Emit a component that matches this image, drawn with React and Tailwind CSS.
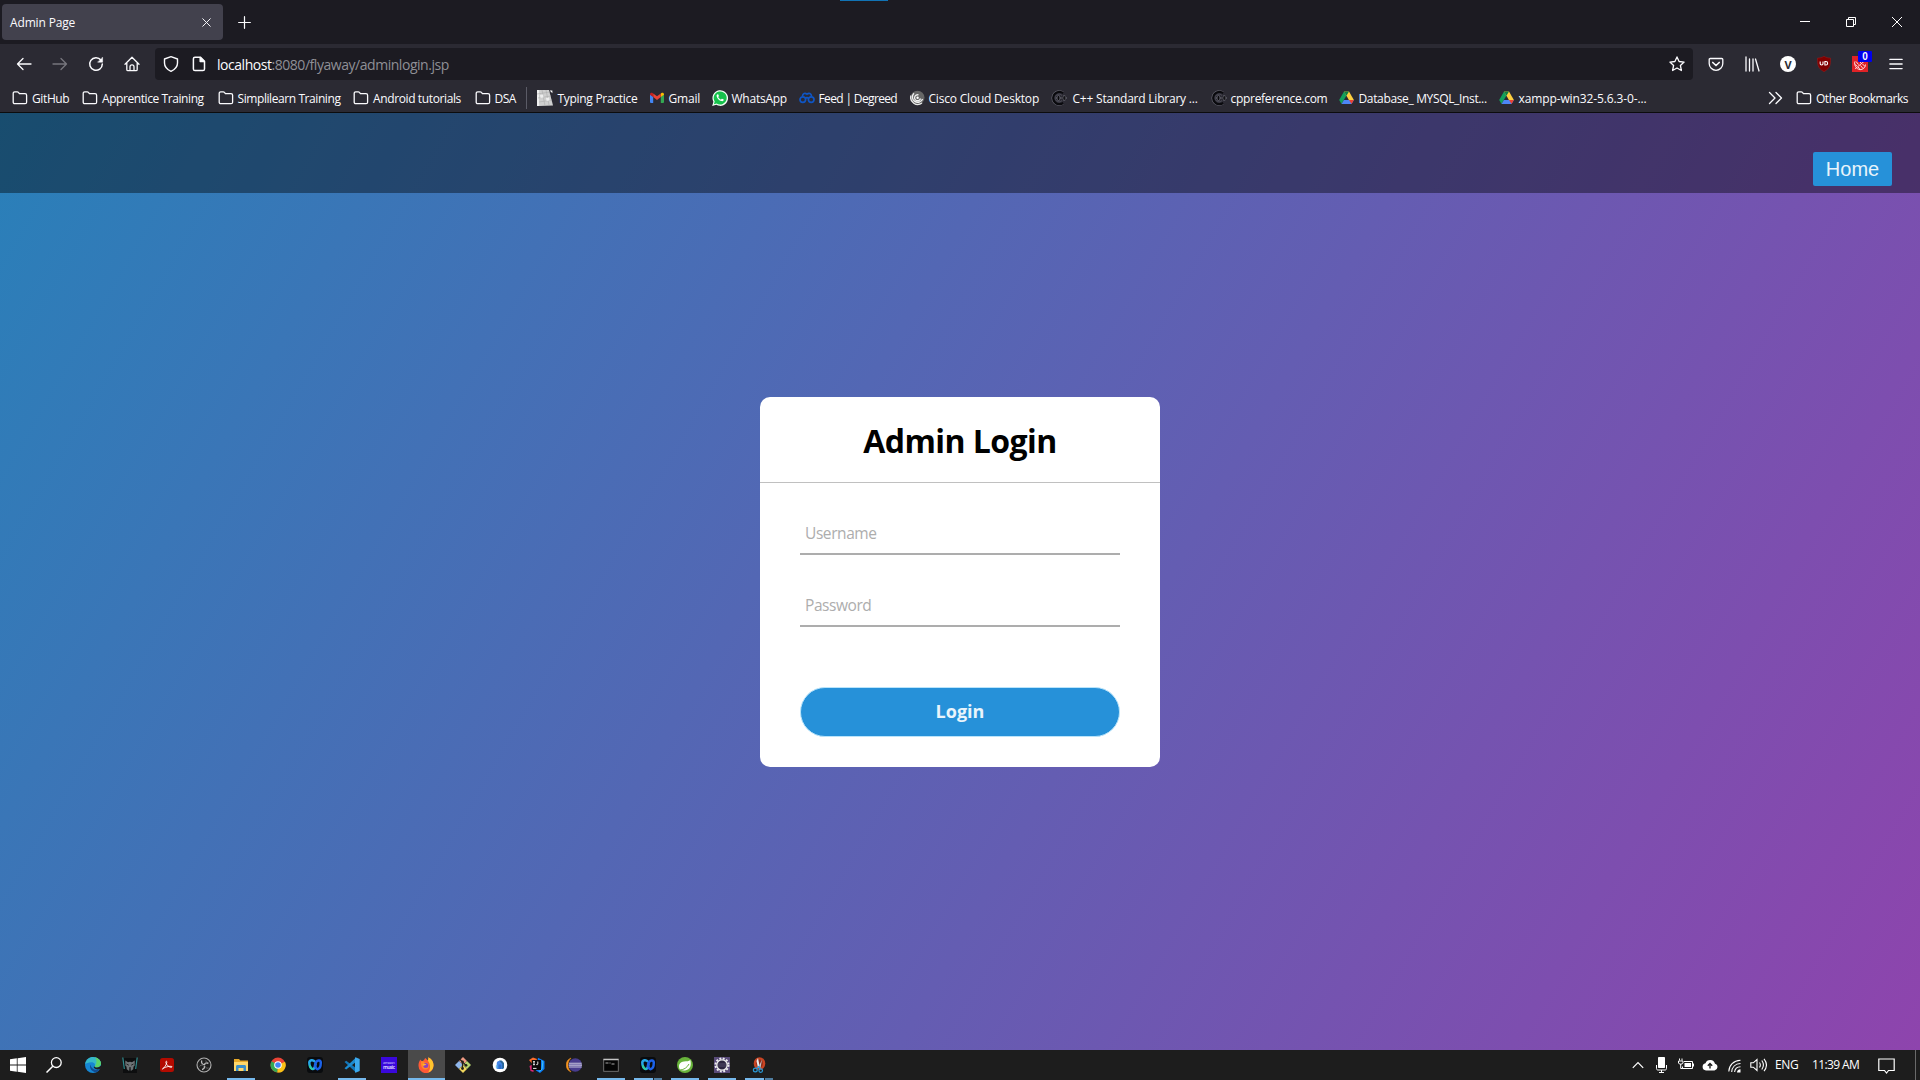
import React from "react";

/* ---------- toolbar icons ---------- */
const Line = ({ children, size = 16, w = 1.3, className = "" }) => (
  <svg width={size} height={size} viewBox="0 0 16 16" fill="none" stroke="currentColor" strokeWidth={w} strokeLinecap="round" strokeLinejoin="round" className={"shrink-0 " + className}>
    {children}
  </svg>
);
const Folder = () => (
  <Line className="text-[#fbfbfe]">
    <path d="M1.2 12.2V3.4c0-1 .6-1.6 1.6-1.6h2.4c.5 0 .9.2 1.2.6l1 1.2h5.6c1 0 1.6.6 1.6 1.6v7c0 .9-.6 1.5-1.5 1.5H2.7c-.9 0-1.5-.6-1.5-1.5z" />
  </Line>
);

/* ---------- bookmark favicons ---------- */
const Keys = () => (
  <svg width="16" height="16" viewBox="0 0 16 16" className="shrink-0">
    <path d="M0 0h12l4 15.5L2 16z" fill="#cfcfcf" />
    <path d="M0 0h2v16H0z" fill="#efefef" />
    <path d="M12.6.4h2.8v2.8z" fill="#fff" />
    <path d="M0 4l13-2M1 8l13-2M2 12l13-2M5 0l3 16M9 0l3 15" stroke="#adadad" strokeWidth=".6" fill="none" />
    <path d="M3 5l3-.5.6 3-3 .5zM9 8l3-.5.6 3-3 .5z" fill="#eee" />
  </svg>
);
const Gmail = () => (
  <svg width="14" height="16" viewBox="0 0 14 16" className="shrink-0">
    <path d="M0 4.5V12a1 1 0 0 0 1 1h2.2V6.8z" fill="#4285f4" />
    <path d="M14 4.5V12a1 1 0 0 1-1 1h-2.2V6.8z" fill="#34a853" />
    <path d="M10.8 3.6V7L14 4.8v-.5c0-1.6-1.6-2-2.5-1.3z" fill="#fbbc04" />
    <path d="M3.2 7V3.4L7 6.2l3.8-2.8V7L7 9.9z" fill="#ea4335" />
    <path d="M0 4.3v.5L3.2 7V3.4L2.5 3C1.6 2.3 0 2.7 0 4.3z" fill="#c5221f" />
  </svg>
);
const WhatsApp = () => (
  <svg width="16" height="16" viewBox="0 0 16 16" className="shrink-0">
    <path d="M.2 15.9l1.2-4.1A7.8 7.8 0 1 1 4.3 14.8z" fill="#f4fff6" />
    <path d="M1.9 14.2l.8-2.8a6.5 6.5 0 1 1 2 2z" fill="#16c24c" />
    <path d="M5.5 4.2c-.9.4-1.1 1.4-.7 2.5.7 1.9 2.4 3.7 4.4 4.4 1.2.4 2.1 0 2.4-.9.2-.5.1-.7-.3-.9l-1.3-.6c-.5-.2-.8.9-1.2.8-1.1-.4-2-1.3-2.5-2.3-.1-.3.7-.7.6-1.1l-.6-1.5c-.1-.4-.4-.5-.8-.4z" fill="#fff" />
  </svg>
);
const Degreed = () => (
  <svg width="16" height="16" viewBox="0 0 16 16" fill="none" stroke="#0f55c4" strokeWidth="1.7" className="shrink-0">
    <circle cx="3.8" cy="9.6" r="2.8" /><circle cx="12.2" cy="9.6" r="2.8" />
    <path d="M3.4 6.3C3.8 3.4 6 2.5 8 4.2c2-1.7 4.2-.8 4.6 2.1M6.4 8.2c1-.7 2.2-.7 3.2 0" />
  </svg>
);
const Cisco = () => (
  <svg width="15" height="16" viewBox="0 0 15 16" className="shrink-0">
    <circle cx="7.5" cy="7.8" r="7" fill="#666" />
    <path d="M1 5.5A7 7 0 0 0 12 13" stroke="#e8e8e8" strokeWidth="1.3" fill="none" />
    <path d="M4 3.2A5.3 5.3 0 1 0 12.6 9M10.5 8.500a3 3 0 1 1-2-3.600" stroke="#f2f2f2" strokeWidth="1.3" fill="none" />
    <circle cx="7.6" cy="7.8" r="1.2" fill="#fff" />
  </svg>
);
const Cpp = () => (
  <svg width="16" height="16" viewBox="0 0 16 16" fill="none" className="shrink-0">
    <path d="M12.600 2.600A7 7 0 1 0 12.600 13.400" stroke="#6a6a75" strokeWidth="1.400" />
    <path d="M12.300 3.200A6.200 6.200 0 1 0 12.300 12.800" stroke="#0a0a0e" strokeWidth="2.200" />
    <path d="M11 5.500a3.900 3.900 0 1 0 0 5" stroke="#5c5c67" strokeWidth=".7" />
    <path d="M5 8h5M7.500 5.500v5M10.700 8h5M13.200 5.500v5" stroke="#74747f" strokeWidth="2.100" />
    <path d="M5.400 8h4.200M7.500 5.900v4.200M11.100 8h4.200M13.200 5.900v4.200" stroke="#09090c" strokeWidth="1.200" />
  </svg>
);
const Drive = () => (
  <svg width="15" height="16" viewBox="0 0 15 16" className="-ml-px mr-px shrink-0">
    <path d="M5 1.5L.2 10l2.3 4L7.5 5.5z" fill="#11a05c" />
    <path d="M5 1.5h5L14.9 10H9.9z" fill="#ffcf3f" />
    <path d="M5 1.5h5L7.5 5.7z" fill="#0b8043" />
    <path d="M2.5 14l2.4-4h10l-2.4 4z" fill="#4d86f7" />
    <path d="M10 10h4.9l-2.4 4z" fill="#ea4335" />
  </svg>
);

/* [icon, label, slot width, gap and tracking] */
const bookmarks = [
  [Folder, "GitHub", "w-[70px] gap-[4px] tracking-[-0.380px]"],
  [Folder, "Apprentice Training", "w-[135.500px] gap-[4px] tracking-[-0.420px]"],
  [Folder, "Simplilearn Training", "w-[135.500px] gap-[4px] tracking-[-0.420px]"],
  [Folder, "Android tutorials", "w-[121.500px] gap-[4px] tracking-[-0.380px]"],
  [Folder, "DSA", "w-[50px] gap-[4px] tracking-[-0.550px]"],
];
const sites = [
  [Keys, "Typing Practice", "w-[113px] gap-[5px] tracking-[-0.300px]"],
  [Gmail, "Gmail", "w-[62px] gap-[5px] tracking-[-0.200px]"],
  [WhatsApp, "WhatsApp", "w-[87px] gap-[4px] tracking-[-0.240px]"],
  [Degreed, "Feed | Degreed", "w-[111px] gap-[4px] tracking-[-0.640px]"],
  [Cisco, "Cisco Cloud Desktop", "w-[141px] gap-[4px] tracking-[-0.200px]"],
  [Cpp, "C++ Standard Library ...", "w-[160px] gap-[6px] tracking-[-0.220px]"],
  [Cpp, "cppreference.com", "w-[129px] gap-[4px] tracking-[-0.290px]"],
  [Drive, "Database_ MYSQL_Inst...", "w-[160px] gap-[4px] tracking-[-0.350px]"],
  [Drive, "xampp-win32-5.6.3-0-...", "w-[160px] gap-[4px] tracking-[-0.120px]"],
];
const Bookmark = ({ item: [Icon, label, cls] }) => (
  <div className={"flex shrink-0 items-center whitespace-nowrap " + cls}>
    <Icon />
    <span className="pt-px">{label}</span>
  </div>
);

/* ---------- taskbar icons ---------- */
const T = ({ children }) => (
  <svg width="16" height="16" viewBox="0 0 16 16" fill="none">{children}</svg>
);
const Windows = () => <T><path d="M0 2.300l6.800-1v6.300H0zM7.600 1.200L16 0v7.600H7.600zM0 8.400h6.800v6.300L0 13.700zM7.600 8.400H16V16l-8.400-1.200z" fill="#fff" /></T>;
const SearchIcon = () => <T><circle cx="10.300" cy="5.600" r="4.900" stroke="#fff" strokeWidth="1.300" /><path d="M6.800 9.200L.5 15.500" stroke="#fff" strokeWidth="1.500" /></T>;
const Edge = () => (
  <T>
    <circle cx="8" cy="8" r="8" fill="#1686d3" />
    <path d="M.1 7C1 2.500 4.500 0 8 0c4.500 0 8 3.200 8 6.600 0 2.300-1.800 3.800-4 3.800-1.700 0-2.600-.6-2.300-1.200.9-1.700-.4-4-3.200-4C3.700 5.200 1 6.300.1 7z" fill="#36b9c8" />
    <path d="M10 .3c3.700 1 6 3.600 6 6.300 0 2.300-1.800 3.800-4 3.800-1.700 0-2.600-.6-2.300-1.200C12 7.500 12 3 10 .3z" fill="#5bd368" />
    <path d="M5.500 7.500C4 10.500 6.500 15 11 15.200c1.500-.6 2.900-1.600 3.800-3C10 14.400 6 11.500 5.500 7.500z" fill="#114b91" />
    <path d="M9.700 9.200c-.4.800.6 1.300 2.300 1.300 1.500 0 3-.7 3.700-1.900l.8 2.200-1.600 1.200c-2.700 1.100-5.700.1-6.300-2z" fill="#1d1d1d" />
  </T>
);
const Predator = () => (
  <T>
    <path d="M1 1h14v15H1z" fill="#0d0e0f" />
    <path d="M.8.500L1.500 5.500 2.300 12M15.200.500l-.7 5-.8 6.500" stroke="#2f8d90" strokeWidth="1.200" />
    <path d="M3.300 3.500L6 5.300l2-.6 2 .6 2.700-1.800v5l-1.200 1.200-.3 2.500L8.800 14l-.3-4h-1l-.3 4-2.400-1.800-.3-2.500-1.200-1.200z" fill="#6d7376" />
    <path d="M4.500 7l2.300 1.200M11.500 7L9.200 8.200" stroke="#1a1b1c" strokeWidth=".9" />
  </T>
);
const Acrobat = () => (
  <T><rect x="1" y="1" width="14" height="14" rx="2.500" fill="#b30b00" /><path d="M3.500 12c2-1.300 3.900-4.300 4.300-6.500.3-1.700-1.200-1.700-.9 0 .4 2.200 2.700 4.500 5 4.800 1.600.1 1.500-1 0-1-2.400-.1-5.300.7-7.400 1.900-1.200.7-1.500 1.100-1 .8z" stroke="#fff" strokeWidth=".9" /></T>
);
const Obs = () => (
  <T>
    <circle cx="8" cy="8" r="7" fill="#202020" stroke="#b0b0b0" strokeWidth="1.100" />
    <path d="M5.800 3.600c-.8 2 .3 3.700 2.200 4M12.400 6.300C10.700 5.500 8.900 6.300 8.300 8M6 12.500c1.900-.2 3-2 2.300-3.800" stroke="#c0c0c0" strokeWidth="1.300" />
    <path d="M3.500 9.500c.8-1.300 2.300-1.800 3.800-1.200M9.700 3.600c1 1.200.8 2.600-.3 3.700M12.500 11c-1.500.5-3-.3-3.500-1.800" stroke="#707070" strokeWidth=".9" />
  </T>
);
const Explorer = () => (
  <T><path d="M1 2h5l1.300 1.500H15V14H1z" fill="#e8a928" /><path d="M1 5h14v9H1z" fill="#ffd86b" /><path d="M3 14V9.500C3 8.700 3.500 8 4.500 8h7c1 0 1.500.7 1.500 1.500V14h-2.500v-3h-5v3z" fill="#3b8fc8" /></T>
);
const Chrome = () => (
  <T>
    <circle cx="8" cy="8" r="7.500" fill="#ea4335" />
    <path d="M8 8L1.500 4.200A7.500 7.500 0 0 0 7.500 15.500z" fill="#34a853" />
    <path d="M8 8l7-3.200A7.500 7.500 0 0 1 7.400 15.500z" fill="#fbc116" />
    <circle cx="8" cy="8" r="3.800" fill="#fff" /><circle cx="8" cy="8" r="2.800" fill="#4285f4" />
  </T>
);
const Webex = () => (
  <T>
    <rect x="0" y="0" width="16" height="16" rx="3" fill="#090b0e" />
    <path d="M7.500 4.300C6 2.500 2.400 2.800 2.300 5.600c0 2.700 1.200 6.200 3.200 6.500 1.700.2 2.500-2 3-4.800" stroke="#25a7e8" strokeWidth="2.500" strokeLinecap="round" />
    <path d="M8 8.500c.6 2.300 1.500 3.900 2.900 3.600 2-.5 2.900-3.800 2.900-6.500-.1-2.600-3.300-2.700-4.500-.8-.7 1-1.100 2.300-1.400 3.700" stroke="#1c62e8" strokeWidth="2.500" strokeLinecap="round" />
    <path d="M3 9c.6 2 1.400 3 2.500 3" stroke="#2fd09a" strokeWidth="2" strokeLinecap="round" />
  </T>
);
const VsCode = () => (
  <T>
    <path d="M.5 5l1.700-1.200L12 11v4.500z" fill="#1376b8" />
    <path d="M.5 11.200l1.700 1.200L12 5V.5z" fill="#1c8bd1" />
    <path d="M11.500.2L15.700 2v12l-4.200 1.800L11 15V1z" fill="#3ba9ee" />
  </T>
);
const Music = () => (
  <T>
    <rect width="16" height="16" fill="#3a08dc" />
    <text x="8" y="7" textAnchor="middle" fontSize="4.300" fontFamily="Open Sans" fontWeight="600" textLength="12" fill="#a794f5">amazon</text>
    <text x="8" y="12" textAnchor="middle" fontSize="5" fontFamily="Open Sans" fontWeight="700" textLength="12" fill="#cfc3ff">music</text>
  </T>
);
const Firefox = () => (
  <T>
    <path d="M2.500 2.500C3 3.500 3.500 4 4.500 4.200 6 3 6.700 2.500 7 1c1.500.8 2 1.700 2.700 2.500C10.500 2.500 10.500 1 10.300.2c3.500 1.700 5.500 5 5.200 8.600A7.500 7.500 0 0 1 .5 8.500c0-2.500.7-4.300 2-6z" fill="#ff5a36" />
    <path d="M10.300.2c3.500 1.700 5.500 5 5.200 8.600A7.500 7.500 0 0 1 10 15.500c2.800-3.500 2.700-8-.3-12C10.500 2.500 10.500 1 10.300.2z" fill="#ffc52e" />
    <path d="M3 4.500C4.500 4 6 4.500 6.500 5.500 9 5.300 11 6.500 11 9s-1.800 3.500-3.500 3.500C5 12.500 3.500 10.500 3 8z" fill="#ff8a26" />
    <circle cx="7.800" cy="8.400" r="2.500" fill="#9040c0" />
    <path d="M4.500 7.200c1-.8 2.700-.6 4 .2-1 .8-2.300.6-2.800 1.600-.7-.4-1.100-1-1.200-1.800z" fill="#ffb22e" />
  </T>
);
const Git = () => (
  <T>
    <path d="M8 0l4 4-4 4-4-4z" fill="#ef9a83" /><path d="M12 4l4 4-4 4-4-4z" fill="#b5d46f" />
    <path d="M4 4l4 4-4 4-4-4z" fill="#8fb6ea" /><path d="M8 8l4 4-4 4-4-4z" fill="#efd55d" />
    <path d="M5 2.500l5.700 5.700M7.500 5v6.500" stroke="#24201a" strokeWidth="1.200" />
    <circle cx="7.500" cy="4.800" r="1.400" fill="#24201a" /><circle cx="11" cy="8.300" r="1.400" fill="#24201a" /><circle cx="7.500" cy="11.500" r="1.400" fill="#24201a" />
  </T>
);
const Android = () => (
  <T>
    <circle cx="8" cy="8" r="7.300" fill="#fff" />
    <path d="M4.700 12V7a3.300 3.300 0 0 1 6.600 0v5z" fill="#4285e8" />
    <path d="M7 3.600h2.600L12 6v5l-1.800 1.200V7z" fill="#2a6797" />
    <path d="M6.600 7.500h2.800v4.500H6.600z" fill="#2b6cc4" /><path d="M3.800 8.500l1.500-.7v4l-1.500-1z" fill="#73c4ef" />
  </T>
);
const Idea = () => (
  <T>
    <path d="M0 3l4-2.500L8 2 5 9z" fill="#fc6c2b" /><path d="M.5 9l4-2v8l-3-1z" fill="#d92673" />
    <path d="M9 .8L15.500 4v8L11 16l-4-2.500z" fill="#087cfa" /><path d="M12.800 3.500l1 1.700-.8 6.800-3 2.500" stroke="#58d6e6" strokeWidth=".8" />
    <rect x="2.700" y="3" width="9.300" height="10" fill="#090909" />
    <path d="M4 4.700h2M5 4.700v3M4 7.700h2M8.800 4.500v2.500c0 .8-1 .9-1.600.4M4 11.400h3.500" stroke="#fff" strokeWidth=".9" />
  </T>
);
const Eclipse = () => (
  <T>
    <path d="M5 1A7.500 7.500 0 0 0 5 15 9.500 9.500 0 0 1 5 1z" fill="#f7941e" stroke="#f7941e" strokeWidth=".5" />
    <circle cx="9.300" cy="8" r="6.700" fill="#483c8e" />
    <path d="M3 6.200h12.700M2.700 8.100h13.300M3 10h12.700" stroke="#c4c1dc" strokeWidth="1.100" />
  </T>
);
const Cmd = () => (
  <T><rect x=".7" y="2" width="14.600" height="12.300" fill="#050505" stroke="#777" strokeWidth=".9" /><path d="M.5 2.600h15" stroke="#c5c5c5" strokeWidth="1.300" /><path d="M2.500 6h3M6.500 6h1M8.500 7h3" stroke="#aaa" strokeWidth="1" /></T>
);
const Spring = () => (
  <T><circle cx="8" cy="8" r="8" fill="#68b33b" /><path d="M13.300 3c.9 3.500.7 7.300-2 9.200-2.600 1.700-6.400 1.300-8 .7l-.6-.7C.8 8 3 4.800 7 4.400c2.500-.2 4.800.1 6.300-1.400z" fill="#fff" /><path d="M3 13c4-.3 7-2.300 9-6" stroke="#68b33b" strokeWidth="1" /></T>
);
const Gear = () => (
  <T>
    <rect width="16" height="16" fill="#594b79" />
    <circle cx="8" cy="8" r="6.500" stroke="#ececf0" strokeWidth="2" strokeDasharray="1.900 1.500" />
    <circle cx="8" cy="8" r="5.200" fill="#2c2540" stroke="#eee" strokeWidth="1.300" />
    <path d="M4 7h8M4 9h8" stroke="#655b7f" strokeWidth=".7" />
  </T>
);
const Snip = () => (
  <T>
    <ellipse cx="8.500" cy="6.500" rx="5.800" ry="6.300" fill="#c84423" /><ellipse cx="8.500" cy="6.500" rx="3.300" ry="4" fill="#8d2c1a" />
    <path d="M7 1l1.800 9L7 11 5.500 4z" fill="#e9edf0" /><path d="M11 2.500L9.500 11 8 9z" fill="#bcc8cf" />
    <circle cx="4.300" cy="13" r="1.900" stroke="#2a9ad8" strokeWidth="1.200" /><circle cx="9.700" cy="13.600" r="1.800" stroke="#2a9ad8" strokeWidth="1.200" />
    <path d="M5.500 11.500L8 9.500l1.300 2.500" stroke="#2a9ad8" strokeWidth="1.200" />
  </T>
);
const apps = [
  [Edge], [Predator], [Acrobat], [Obs], [Explorer, "run"], [Chrome], [Webex], [VsCode, "run"], [Music], [Firefox, "active"],
  [Git], [Android], [Idea], [Eclipse], [Cmd, "run"], [Webex, "multi"], [Spring, "run"], [Gear, "run"], [Snip, "multi"],
];
const TaskButton = ({ item: [Icon, state] }) => (
  <div className={"flex h-[30px] w-[37px] shrink-0 flex-col items-center " + (state === "active" ? "bg-[#4a4a4a]" : "")}>
    <div className="flex h-[28px] items-center pt-[2px]"><Icon /></div>
    {state === "active" && <div className="h-[2px] w-full bg-[#76b9ed]" />}
    {state === "run" && <div className="h-[2px] w-[28px] bg-[#76b9ed]" />}
    {state === "multi" && <div className="flex h-[2px] w-[28px]"><div className="w-[19px] bg-[#76b9ed]" /><div className="ml-px w-[8px] bg-[#4f7da0]" /></div>}
  </div>
);

export default function App() {
  return (
    <div className="flex h-[1080px] w-[1920px] flex-col overflow-hidden bg-[#2b2a33] font-['Open_Sans','Noto_Sans',sans-serif] text-[#fbfbfe]">
      {/* tab strip */}
      <div className="relative flex h-[44px] shrink-0 items-start bg-[#1c1b22]">
        <div className="absolute left-[840px] top-0 h-px w-[48px] bg-[#1173b5]" />
        <div className="ml-[2px] mt-[4px] flex h-[36px] w-[221px] items-center justify-between rounded-[4px] bg-[#42414d] pl-[8px] pr-[11px] text-[12px] tracking-[-0.150px]">
          <span className="pt-px">Admin Page</span>
          <Line size={11} w={1.400}><path d="M2.500 2.500l11 11M13.500 2.500l-11 11" /></Line>
        </div>
        <div className="ml-[15px] mt-[16px]"><Line size={13} w={1.500}><path d="M8 .8v14.400M.8 8h14.400" /></Line></div>
        <div className="ml-auto mr-[18px] mt-[17px] flex items-center gap-[36px]">
          <svg width="10" height="10" viewBox="0 0 10 10"><path d="M0 4.500h10" stroke="#fff" /></svg>
          <svg width="10" height="10" viewBox="0 0 10 10" fill="none" stroke="#fff"><path d="M.5 2.500h7v7h-7zM2.500 2.500v-2h7v7h-2" /></svg>
          <svg width="10" height="10" viewBox="0 0 10 10" stroke="#fff"><path d="M0 0l10 10M10 0L0 10" /></svg>
        </div>
      </div>

      {/* navigation */}
      <div className="flex h-[40px] shrink-0 items-center">
        <div className="ml-[16px] flex w-[139px] items-center gap-[20px]">
          <Line><path d="M15 8H1.500M7 2.500L1.500 8 7 13.500" /></Line>
          <Line className="text-[#77767e]"><path d="M1 8h13.500M9 2.500L14.500 8 9 13.500" /></Line>
          <Line w={1.500}><path d="M13 4.200A6.300 6.300 0 1 0 14.300 8" /><path d="M14.600 1.500v4.700H9.900z" fill="currentColor" strokeWidth=".5" /></Line>
          <Line className="-ml-[0.500px]"><path d="M1 8.300l7-7 7 7M2.800 7v6.500c0 .8.400 1.200 1.200 1.200h8c.8 0 1.200-.4 1.200-1.200V7M6 14.500v-3.700C6 9.500 6.700 8.800 8 8.800s2 .7 2 2v3.700" /></Line>
        </div>
        <div className="flex h-[32px] w-[1538px] shrink-0 items-center rounded-[4px] bg-[#1c1b22] pl-[8px] pr-[8px]">
          <Line w={1.400}><path d="M8 .7L14.500 3v4c0 3.800-2.600 6.500-6.500 8.300C4.100 13.500 1.500 10.800 1.500 7V3z" /></Line>
          <Line w={1.500} className="ml-[12px]"><path d="M4 1.200h5.500l4 4V13c0 1-.6 1.600-1.600 1.600H4c-1 0-1.600-.6-1.600-1.600V2.800C2.400 1.800 3 1.200 4 1.200z" /><path d="M9.200 1.500v4h4z" fill="currentColor" /></Line>
          <span className="ml-[10px] whitespace-nowrap pt-px text-[14px] tracking-[-0.460px]">localhost<span className="text-[#8f8f96]">:8080/flyaway/adminlogin.jsp</span></span>
          <Line w={1.300} className="ml-auto"><path d="M8 .9l2.100 4.600 5 .6-3.700 3.400 1 5L8 12l-4.400 2.500 1-5L.9 6.100l5-.6z" /></Line>
        </div>
        <div className="ml-[15px] flex items-center">
          <Line><path d="M2.300 2.500h11.400c.7 0 1.100.4 1.100 1.100V7.500a6.800 6.800 0 0 1-13.600 0V3.600c0-.7.4-1.100 1.100-1.100z" /><path d="M4.800 6.500L8 9.500l3.200-3" strokeWidth="1.700" /></Line>
          <Line className="ml-[20px]"><path d="M2 1v14M5.500 3v12M9 3v12M11.500 3l3.500 12" /></Line>
          <div className="ml-[20px] flex size-[16px] items-center justify-center rounded-full bg-white text-[11px] font-bold leading-none text-[#2b2a33]">V</div>
          <svg width="16" height="16" viewBox="0 0 16 16" className="ml-[20px]">
            <path d="M8 .3c2 1.300 4.300 1.700 6.500 1.800 0 6.200.2 9.900-6.500 13.600C1.300 12 1.500 8.300 1.500 2.100 3.700 2 6 1.600 8 .3z" fill="#800000" stroke="#a01a1a" strokeWidth=".5" />
            <path d="M4.200 5.500V7.800c0 1.600 2.800 1.600 2.800 0V5.500M8.900 5.500v3.500h1c2.300 0 2.300-3.500 0-3.500z" fill="none" stroke="#fff" strokeWidth="1.100" />
          </svg>
          <div className="relative ml-[20px] size-[16px] bg-[#e02226]">
            <svg width="16" height="16" viewBox="0 0 16 16" fill="none" stroke="#ffdcdc" strokeWidth="1"><path d="M2.800 5.500C2 9 4 13 8 13.700c3 0 5.300-2.200 5.500-5.200" /><path d="M3.200 12.800L12.500 5M4 5.500l2.500 3M6.500 4l2.500 3M8.500 9.500l2.500 3M6.200 11l1.600 2.300M10.500 8l2.500 2.500M3 8.500l2 1.500" /></svg>
            <div className="absolute -top-[5px] left-[6px] flex h-[11px] w-[14px] items-center justify-center rounded-[1px] bg-[#0000ee] font-['Liberation_Sans',sans-serif] text-[10px] font-bold leading-none">0</div>
          </div>
          <Line w={1.500} size={14} className="ml-[21px]"><path d="M1 2.800h14M1 8h14M1 13.200h14" /></Line>
        </div>
      </div>

      {/* bookmarks */}
      <div className="flex h-[29px] shrink-0 items-center border-b border-[#0c0c0d] pl-[12px] text-[12px]">
        {bookmarks.map((b) => <Bookmark key={b[1]} item={b} />)}
        <div className="ml-[1px] mr-[10px] h-[22px] w-px bg-[#5b5b66]" />
        {sites.map((b) => <Bookmark key={b[1]} item={b} />)}
        <div className="ml-auto mr-[12px] flex items-center">
          <Line w={1.300}><path d="M2.500 2.500L8 8l-5.500 5.500M9 2.500L14.500 8 9 13.500" /></Line>
          <div className="ml-[13px] flex items-center gap-[4px] whitespace-nowrap tracking-[-0.460px]"><Folder /><span className="pt-px">Other Bookmarks</span></div>
        </div>
      </div>

      {/* page */}
      <div className="flex h-[937px] shrink-0 flex-col bg-[linear-gradient(120deg,#2980b9,#8e44ad)]">
        <div className="flex h-[80px] shrink-0 items-start justify-end bg-black/40 pr-[28px] pt-[39px]">
          <button className="h-[34px] w-[79px] rounded-[2px] bg-[#2691d9] font-['Liberation_Sans',Arial,sans-serif] text-[20px] leading-[34px] text-[#e9f4fb]">Home</button>
        </div>
        <div className="mx-auto mt-[204px] flex h-[370px] w-[400px] flex-col rounded-[10px] bg-white">
          <h1 className="h-[86px] border-b border-[#c0c0c0] pt-px text-center text-[32px] font-bold leading-[85px] tracking-[-0.550px] text-black">Admin Login</h1>
          <div className="flex flex-col px-[40px]">
            <div className="mt-[32px] flex h-[40px] items-center border-b-2 border-[#adadad] pl-[5px] text-[15.500px] tracking-[-0.420px] text-[#adadad]">Username</div>
            <div className="mt-[32px] flex h-[40px] items-center border-b-2 border-[#adadad] pl-[5px] text-[15.500px] tracking-[-0.440px] text-[#adadad]">Password</div>
            <button className="mt-[60px] h-[50px] rounded-[25px] border border-[#b9e4fb] bg-[#2691d9] pb-[2px] text-[18px] font-bold leading-[46px] text-[#e9f4fb]">Login</button>
          </div>
        </div>
      </div>

      {/* taskbar */}
      <div className="flex h-[30px] shrink-0 items-start bg-[#1d1d1d] text-white">
        <div className="flex h-[30px] w-[74.500px] items-center gap-[20px] pl-[10px]"><Windows /><SearchIcon /></div>
        {apps.map((a, i) => <TaskButton key={i} item={a} />)}
        <div className="ml-auto flex h-[30px] items-center">
          <svg width="12" height="8" viewBox="0 0 12 8" fill="none" stroke="#fff" strokeWidth="1.200"><path d="M.8 6.800L6 1.500l5.200 5.300" /></svg>
          <svg width="11" height="16" viewBox="0 0 11 16" className="ml-[12px]" fill="none" stroke="#fff"><rect x="2" y="0" width="7" height="11" rx=".7" fill="#fff" stroke="none" /><path d="M.5 8v3.500c0 1 .5 1.500 1.500 1.500h7c1 0 1.500-.5 1.500-1.500V8M5.500 13v2.500M3 15.500h5" /></svg>
          <svg width="16" height="14" viewBox="0 0 16 14" className="ml-[11px]" fill="none" stroke="#fff"><path d="M6 3.500h8.500v7h-10v-2M15.500 5.500v3M1.500 .5v2M4 .5v2M.5 3h4.500v2c0 1.500-4.500 1.500-4.500 0zM2.700 6v4.500h2" /><path d="M6.500 5h6.500v4H6.500z" fill="#fff" stroke="none" /></svg>
          <svg width="16" height="12" viewBox="0 0 16 12" className="ml-[8px]"><path d="M4 11.500a3.700 3.700 0 0 1-.5-7.300 5 5 0 0 1 9.500.5 3.500 3.500 0 0 1-.5 6.800z" fill="#fff" /><path d="M8 9.500V5M5.800 6.800L8 4.600l2.200 2.200" stroke="#1d1d1d" strokeWidth="1.400" fill="none" /></svg>
          <svg width="14" height="14" viewBox="0 0 14 14" className="mt-[2px] ml-[10px]" fill="none" stroke="#fff" strokeWidth="1.100"><path d="M.8 12.500C1 6 5.500 1.500 12.500 1.200M3.700 13c.3-4.800 3.500-8.300 8.800-8.500M6.600 13c.3-3 2.300-5.200 5.900-5.300" /><path d="M9 13.500c0-2 1.200-3.300 3.500-3.300v3.300z" fill="#fff" stroke="none" /></svg>
          <svg width="17" height="14" viewBox="0 0 17 14" className="ml-[8px]" fill="none" stroke="#fff" strokeWidth="1.100"><path d="M.8 4.800h2.500L7 1.500v11L3.300 9.200H.8zM9.500 4.500c1 1.500 1 3.500 0 5M11.800 2.500c2 2.800 2 6.200 0 9M14 .8c3 3.800 3 8.600 0 12.400" /></svg>
          <span className="ml-[8px] w-[37px] text-[12px] tracking-[-0.400px]">ENG</span>
          <span className="w-[66px] whitespace-nowrap text-[12px] tracking-[-0.600px]">11:39 AM</span>
          <svg width="17" height="16" viewBox="0 0 17 16" className="mt-[1px]" fill="none" stroke="#fff" strokeWidth="1.200"><path d="M.8 1h15.400v11.500H10.500L8.500 15l-2-2.500H.8z" /></svg>
          <div className="ml-[20px] mr-[4px] h-[30px] w-px bg-[#6a6a6a]" />
        </div>
      </div>
    </div>
  );
}
